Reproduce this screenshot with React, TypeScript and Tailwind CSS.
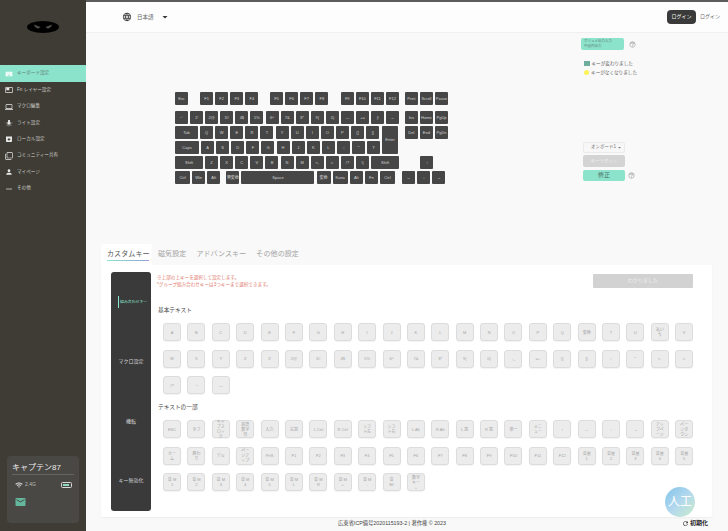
import React from "react";
import { MdKeyboard, MdLaptop, MdArchive, MdPerson, MdMoreHoriz, MdFilterNone, MdTungsten, MdOutlineFeaturedVideo, MdLanguage, MdArrowDropDown, MdHelpOutline, MdWifi, MdRefresh, MdEmail } from "react-icons/md";

const JP = "font-['Liberation_Sans','Noto_Sans_CJK_JP',sans-serif]";

const navItems = [
  { label: "キーボード設定", icon: MdKeyboard, active: true },
  { label: "Fn レイヤー設定", icon: MdOutlineFeaturedVideo },
  { label: "マクロ編集", icon: MdLaptop },
  { label: "ライト設定", icon: MdTungsten },
  { label: "ローカル設定", icon: MdArchive },
  { label: "コミュニティー共有", icon: MdFilterNone },
  { label: "マイページ", icon: MdPerson },
  { label: "その他", icon: MdMoreHoriz },
];

const Key = ({ label, className = "w-[13px]" }: { label: string; className?: string }) => (
  <div className={`h-[13px] shrink-0 rounded-[1px] bg-[#464646] flex items-center justify-center text-[4px] text-[#d4d4d4] whitespace-nowrap overflow-hidden ${className}`}>
    {label}
  </div>
);

const KeyRow = ({ keys }: { keys: string[] }) => (
  <>
    {keys.map((k) => (
      <Key key={k} label={k} />
    ))}
  </>
);

const Keyboard = () => (
  <div className="flex flex-col gap-[2.1px] w-[273px] shrink-0">
    <div className="flex gap-[2.1px] mb-[4px]">
      <Key label="Esc" />
      <div className="w-[10px]" />
      <KeyRow keys={["F1", "F2", "F3", "F4"]} />
      <div className="w-[9.5px]" />
      <KeyRow keys={["F5", "F6", "F7", "F8"]} />
      <div className="w-[10.5px]" />
      <KeyRow keys={["F9", "F10", "F11", "F12"]} />
      <div className="w-[2px]" />
      <KeyRow keys={["Print", "Scroll", "Pause"]} />
    </div>
    <div className="flex gap-[2.1px]">
      <KeyRow keys={["~`", "1!", "2@", "3#", "4$", "5%", "6^", "7&", "8*", "9(", "0)", "—", "+=", "|\\", "←"]} />
      <div className="w-[2px]" />
      <KeyRow keys={["Ins", "Home", "PgUp"]} />
    </div>
    <div className="flex gap-[2.1px]">
      <div className="flex flex-col gap-[2.1px] w-[208px]">
        <div className="flex gap-[2.1px]">
          <Key label="Tab" className="w-[23px]" />
          <KeyRow keys={["Q", "W", "E", "R", "T", "Y", "U", "I", "O", "P", "{[", "}]"]} />
        </div>
        <div className="flex gap-[2.1px]">
          <Key label="Caps" className="w-[24px]" />
          <KeyRow keys={["A", "S", "D", "F", "G", "H", "J", "K", "L", ":;", "\"'", "¥"]} />
        </div>
      </div>
      <div className="h-[28px] w-[17px] rounded-[1px] bg-[#464646] flex items-center justify-center text-[4px] text-[#d4d4d4]">Enter</div>
      <div className="w-[3px]" />
      <div className="flex flex-col gap-[2.1px]">
        <div className="flex gap-[2.1px]">
          <KeyRow keys={["Del", "End", "PgDn"]} />
        </div>
      </div>
    </div>
    <div className="flex gap-[2.1px]">
      <Key label="Shift" className="w-[28px]" />
      <KeyRow keys={["Z", "X", "C", "V", "B", "N", "M", "<,", ">.", "/?", "\\|"]} />
      <Key label="Shift" className="w-[28px]" />
      <div className="w-[17.1px]" />
      <Key label="↑" />
    </div>
    <div className="flex gap-[2.1px]">
      <Key label="Ctrl" className="w-[15px]" />
      <Key label="Win" />
      <Key label="Alt" />
      <div className="w-[2px]" />
      <Key label="無変換" />
      <Key label="Space" className="w-[73px]" />
      <Key label="変換" className="w-[14px]" />
      <Key label="Kana" className="w-[15px]" />
      <Key label="Alt" />
      <Key label="Fn" />
      <Key label="Ctrl" className="w-[15px]" />
      <div className="w-[3px]" />
      <KeyRow keys={["←", "↓", "→"]} />
    </div>
  </div>
);

const basicKeys = ["A", "B", "C", "D", "E", "F", "G", "H", "I", "J", "K", "L", "M", "N", "O", "P", "Q", "変換", "T", "U", "あいう", "V", "W", "X", "Y", "Z", "1!", "2@", "3#", "4$", "5%", "6^", "7&", "8*", "9(", "0)", "-_", "=+", "[{", "]}", ":;", "\"'", "<,", ">.", "/?", "`~", "—"];

const partKeys = [
  "ESC", "タブ", "キャプスロック", "英語数字母", "入力", "左窓", "L Ctrl", "R Ctrl", "シフト左", "シフト右", "L Alt", "R Alt", "L 窓", "R 窓", "単一", "メニュー", "↑", "←", "↓", "→", "アップページ", "ページダウン",
  "ホーム", "終わり", "デル", "ページアップ", "PrtS", "F1", "F2", "F3", "F4", "F5", "F6", "F7", "F8", "F9", "F10", "F11", "F12", "音量1", "音量2", "音量3", "音量4", "音量5",
  "音 M1", "音 M2", "音 M3", "音 M4", "音 M5", "音 ML", "音 MR", "音 M+", "音 M-", "音 M/", "数字キー +",
];

const SmallKey = ({ label }: { label: string }) => {
  // only japanese labels stack into narrow lines, latin ones stay on one line
  const stacked = /[^\x00-\x7f←↑→↓—]/.test(label);
  return (
    <div className="w-[18px] h-[18px] rounded-[3px] bg-[#ececec] border border-[#dcdcdc] shadow-[0_1px_1px_rgba(0,0,0,0.05)] flex items-center justify-center">
      <span className={`text-center text-[4px] leading-[5px] text-[#a4a4a4] ${stacked ? "w-[8.5px] break-all" : "whitespace-nowrap"}`}>{label}</span>
    </div>
  );
};

const KeyGrid = ({ keys }: { keys: string[] }) => (
  <div className="flex flex-wrap gap-x-[6.4px] gap-y-[8.5px] w-[537px] ml-[6px]">
    {keys.map((k, i) => (
      <SmallKey key={i} label={k} />
    ))}
  </div>
);

export default function App() {
  return (
    <div className={`w-[728px] h-[531px] flex overflow-hidden bg-[#f9f9f9] ${JP}`}>
      <aside className="w-[86px] shrink-0 bg-[#3e3c35] flex flex-col">
        <div className="h-[65px] flex items-center justify-center pb-[11px] pr-[1px]">
          <svg width="32" height="12" viewBox="0 0 32 12">
            <ellipse cx="16" cy="6" rx="16" ry="6" fill="#000" />
            <path d="M7 3.5 L13.5 6 L11.5 7.5 C9.5 7.5 7.5 6 7 3.5Z" fill="#4d4d47" />
            <path d="M25 3.5 L18.5 6 L20.5 7.5 C22.5 7.5 24.5 6 25 3.5Z" fill="#4d4d47" />
          </svg>
        </div>
        <nav className="flex flex-col">
          {navItems.map(({ label, icon: Icon, active }) => (
            <div key={label} className={`flex items-center gap-[4px] pl-[5px] text-[4.6px] ${active ? "h-[17px] bg-[#8ce3cc] text-[#5f7f76]" : "h-[16.4px] text-[#d2d1cc]"}`}>
              <Icon className={`w-[8px] h-[8px] ${active ? "text-white" : "text-[#e8e8e8]"}`} />
              <span className="whitespace-nowrap">{label}</span>
            </div>
          ))}
        </nav>
        <div className="mt-auto mx-[7px] mb-[8px] h-[67px] rounded-[4px] bg-[#494844] px-[5px] pt-[6px]">
          <div className="text-[8px] leading-[11px] text-[#ececec]">キャプテン87</div>
          <div className="h-px bg-[#65645f] mt-[1px]" />
          <div className="flex items-center mt-[6px] pl-[3px] text-[5px] text-[#bdbdb8]">
            <MdWifi className="w-[8px] h-[8px] mr-[2px] text-[#d8d8d8]" />
            <span>2.4G</span>
            <div className="ml-auto mr-[2px] w-[11px] h-[6px] rounded-[1.5px] border border-[#d8d8d8] p-[1px] flex">
              <div className="w-[6px] bg-[#8fd9c2]" />
            </div>
          </div>
          <MdEmail className="mt-[7px] ml-[1px] w-[15px] h-[12px] text-[#63b79d]" />
        </div>
      </aside>

      <main className="flex-1 min-w-0 flex flex-col">
        <header className="h-[33px] shrink-0 border-t-2 border-b border-t-[#5c5c5c] border-b-[#f0f0f0] bg-[#fdfdfd] flex items-center pl-[36px] pr-[8px]">
          <MdLanguage className="w-[10px] h-[10px] text-[#444]" />
          <span className="ml-[5px] text-[5.5px] text-[#666]">日本語</span>
          <MdArrowDropDown className="ml-[5px] w-[12px] h-[12px] text-[#333]" />
          <div className="ml-auto w-[29px] h-[14px] rounded-[4px] bg-[#3a3a3a] text-white text-[5px] flex items-center justify-center">ログイン</div>
          <span className="ml-[4px] text-[5px] text-[#666]">ログイン</span>
        </header>

        <section className="h-[211px] shrink-0 flex pl-[89px]">
          <div className="pt-[59px]">
            <Keyboard />
          </div>
          <div className="ml-[133px] pt-[5px] flex flex-col w-[56px]">
            <div className="flex items-center gap-[5px]">
              <div className="w-[43px] h-[12px] rounded-[2px] bg-[#8ce3cc] text-[3.5px] leading-[5px] text-[#5f7f76] pl-[3px] flex items-center">ボリュメ出力入力<br />中国内出力</div>
              <MdHelpOutline className="w-[7px] h-[7px] text-[#999]" />
            </div>
            <div className="mt-[9px] flex items-center gap-[2px] pl-[3px] text-[4.6px] leading-[9px] text-[#666] whitespace-nowrap">
              <span className="w-[5.5px] h-[5.5px] bg-[#6fae9d]" />キーが変わりました
            </div>
            <div className="flex items-center gap-[2px] pl-[3px] text-[4.6px] leading-[9px] text-[#666] whitespace-nowrap">
              <span className="w-[5.5px] h-[5.5px] rounded-full bg-[#fbf35a]" />キーがなくなりました
            </div>
            <div className="mt-[65px] ml-[2px] w-[42px] h-[11px] rounded-[2px] bg-[#f7f7f7] border border-[#ebebeb] flex items-center justify-end pr-[1px] text-[4.5px] text-[#777]">
              オンボード1<MdArrowDropDown className="w-[7px] h-[7px]" />
            </div>
            <div className="mt-[2px] ml-[2px] w-[42px] h-[12px] rounded-[2px] bg-[#d4d4d4] flex items-center justify-center text-[4.5px] text-[#eeeeee]">キーリセット</div>
            <div className="mt-[3px] flex items-center gap-[3px] ml-[2px]">
              <div className="w-[42px] h-[11px] rounded-[2px] bg-[#8ce3cc] flex items-center justify-center text-[6px] text-[#4f6f66]">修正</div>
              <MdHelpOutline className="w-[7px] h-[7px] text-[#999]" />
            </div>
          </div>
        </section>

        <div className="ml-[15px] mr-[16px] flex items-end h-[21px] shrink-0 gap-[10px] text-[7px] tracking-[0.1px] text-[#a3a3a3]">
          <div className="relative h-[21px] w-[51px] bg-white rounded-t-[2px] flex items-center pl-[6px] text-[#555] whitespace-nowrap">
            カスタムキー
            <span className="absolute left-[6px] right-[3px] bottom-[4px] h-[1px] bg-gradient-to-r from-[#8ce3cc] to-[#8f9fd8]" />
          </div>
          <div className="h-[21px] flex items-center ml-[-4px]">磁気設定</div>
          <div className="h-[21px] flex items-center">アドバンスキー</div>
          <div className="h-[21px] flex items-center">その他の設定</div>
        </div>

        <div className="relative ml-[15px] mr-[16px] h-[252px] shrink-0 bg-white rounded-b-[2px] shadow-[0_1px_2px_rgba(0,0,0,0.05)] flex pl-[10px] pt-[7px]">
          <div className="w-[40px] h-[239px] rounded-[3px] bg-[#3a3a3a] flex flex-col text-[5px] text-[#d8d8d8]">
            <div className="h-[60px] flex items-center pl-[7px]">
              <span className="border-l border-l-[#8ce3cc] pl-[1px] text-[3.9px] text-[#8ce3cc] whitespace-nowrap leading-[12px]">組み合わせキー</span>
            </div>
            <div className="h-[60px] flex items-center justify-center">マクロ設定</div>
            <div className="h-[60px] flex items-center justify-center">機転</div>
            <div className="h-[60px] flex items-center justify-center">キー無効化</div>
          </div>
          <div className="ml-[6px] flex-1 min-w-0">
            <div className="flex items-start h-[29px]">
              <div className="pt-[2px] text-[4.6px] leading-[7px] text-[#e07a6e]">
                <div>※上部の上キーを選択して設定します。</div>
                <div>*グループ組み合わせキーは3つキーまで選択できます。</div>
              </div>
              <div className="ml-auto mr-[19px] mt-[2px] w-[100px] h-[14px] rounded-[1px] bg-[#d2d2d2] flex items-center justify-center text-[5px] text-[#eeeeee]">わかりました</div>
            </div>
            <div className="text-[5.7px] leading-[9px] text-[#444] mt-[5px] ml-[1px]">基本テキスト</div>
            <div className="mt-[8px]"><KeyGrid keys={basicKeys} /></div>
            <div className="text-[5.7px] leading-[9px] text-[#444] mt-[9px] ml-[1px]">テキストの一部</div>
            <div className="mt-[8px]"><KeyGrid keys={partKeys} /></div>
          </div>
          <div className="absolute left-[564px] top-[222px] w-[30px] h-[30px] rounded-full bg-gradient-to-br from-[#7fc4ea] via-[#b3d8ee] to-[#c9ecc8] flex items-center justify-center text-[12px] text-white">人工</div>
        </div>

        <footer className="relative flex-1 flex items-center justify-center text-[5.3px] text-[#444]">
          <span className="ml-[-30px]">広東省ICP備号2020115193-2 | 著作権 © 2023</span>
          <div className="absolute right-[20px] top-[2px] flex items-center gap-[1px] text-[6px] font-bold text-[#222]">
            <MdRefresh className="w-[7px] h-[7px]" />初期化
          </div>
        </footer>
      </main>
    </div>
  );
}
